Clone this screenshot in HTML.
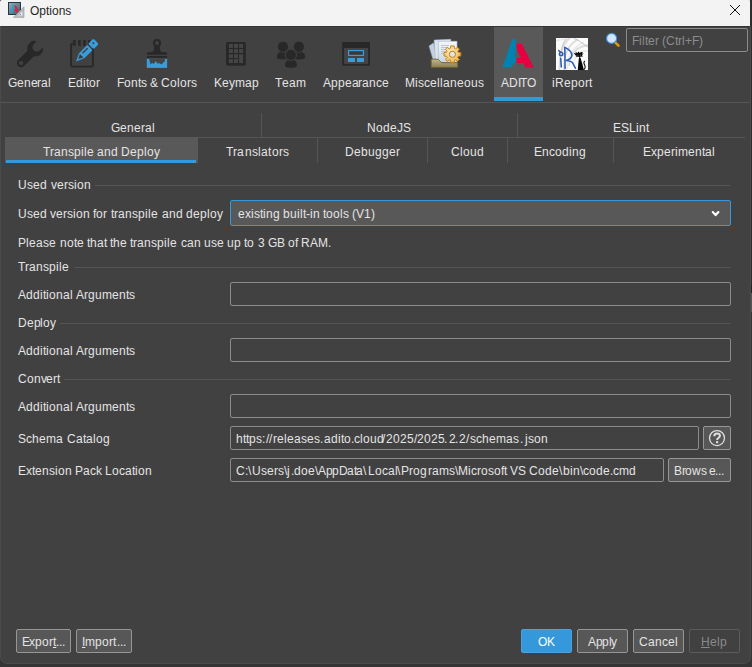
<!DOCTYPE html>
<html><head><meta charset="utf-8"><title>Options</title>
<style>
html,body{margin:0;padding:0;}
body{width:752px;height:667px;overflow:hidden;background:#353535;font-family:"Liberation Sans",sans-serif;font-size:12px;color:#e4e4e4;position:relative;font-kerning:none;}
.a{position:absolute;}
#win{position:absolute;left:0;top:0;width:751px;height:664px;background:#414141;border-radius:2px 2px 7px 7px;overflow:hidden;}
#edge{position:absolute;left:0;top:26px;width:751px;height:638px;box-sizing:border-box;border:1px solid #4b4b4b;border-top:none;border-radius:0 0 7px 7px;pointer-events:none}
#title{position:absolute;left:0;top:0;width:750px;height:26px;background:#f3f3f3;}
#title .tt{position:absolute;left:30px;top:4px;font-size:12px;line-height:14px;color:#262626;white-space:nowrap;}
.t{position:absolute;white-space:nowrap;line-height:14px;height:14px;}
.t b{display:inline-block;font-weight:normal;overflow:visible;white-space:pre}
.t b.u{text-decoration:underline;text-underline-offset:1px}
.hl{position:absolute;height:1px;background:#555}
.vl{position:absolute;width:1px;background:#555}
.tf{position:absolute;box-sizing:border-box;border:1px solid #8c8c8c;border-radius:2px;background:#414141;}
.btn{position:absolute;box-sizing:border-box;border:1px solid #969696;border-radius:2px;background:#575757;}

.w1{width:1px}.w2{width:2px}.w3{width:3px}.w4{width:4px}.w5{width:5px}.w6{width:6px}.w7{width:7px}.w8{width:8px}.w9{width:9px}.w10{width:10px}.w11{width:11px}.w12{width:12px}.w13{width:13px}
</style></head><body>
<div id="win">
<div id="title"><span class="tt">Options</span>
<svg class="a" style="left:7px;top:1px" width="19" height="18" viewBox="7 1 19 18">
<defs><linearGradient id="tg" x1="0" y1="0" x2="1" y2="1"><stop offset="0" stop-color="#9fb0b8"/><stop offset="1" stop-color="#3e5663"/></linearGradient></defs>
<rect x="8.5" y="2.5" width="12" height="12" fill="url(#tg)" stroke="#1d3a47" stroke-width="1"/>
<path d="M10.2 12.8 L12.6 4.6 L14 4.6 L13.6 9 L12.4 12.2 Z" fill="#21a6cc"/>
<path d="M14.3 5.6 L16 5.6 L19 12.6 L17 12.6 L16.3 11.2 L14.3 11.2 L14.3 9.6 L15.5 9.6 Z" fill="#e8174b"/>
<path d="M13.4 17.4 L24 6.8 L24 17.4 Z" fill="#b9bdc0" stroke="#94989b" stroke-width="0.6"/>
<path d="M18.4 15.6 L22.3 11.7 L22.3 15.6 Z" fill="#eef0f1"/>
<path d="M19.4 14 L20.6 15.2 L20.6 14 Z" fill="#3a4a54"/>
</svg>
<svg class="a" style="left:729px;top:4px" width="12" height="12" viewBox="0 0 12 12"><path d="M1 1 L11 11 M11 1 L1 11" stroke="#111" stroke-width="1" fill="none"/></svg>
</div>

<div id="tr" class="a" style="left:750px;top:0;width:1px;height:27px;background:#2e2e2e"></div>
<div id="tsh" class="a" style="left:0;top:26px;width:750px;height:1px;background:#363636"></div>
<!-- toolbar -->
<div class="a" style="left:494px;top:27px;width:49px;height:74px;background:#595959"></div>
<div class="a" style="left:494px;top:97px;width:49px;height:4px;background:#3498db"></div>
<div class="hl" style="left:0;top:102px;width:750px"></div>
<svg class="a" style="left:0;top:26px" width="750" height="76" viewBox="0 26 750 76">
<defs>
<linearGradient id="tray" x1="0" y1="0" x2="0" y2="1"><stop offset="0" stop-color="#c2b88c"/><stop offset="1" stop-color="#8a7d4c"/></linearGradient>
<linearGradient id="sheet" x1="0" y1="0" x2="0" y2="1"><stop offset="0" stop-color="#f4f7fb"/><stop offset="1" stop-color="#c9d6e6"/></linearGradient>
<radialGradient id="gear" cx="0.4" cy="0.35" r="0.7"><stop offset="0" stop-color="#fdeec8"/><stop offset="1" stop-color="#efb043"/></radialGradient>
</defs>
<!-- General: wrench -->
<mask id="wm" maskUnits="userSpaceOnUse" x="10" y="34" width="40" height="40"><rect x="10" y="34" width="40" height="40" fill="#fff"/><circle cx="36.8" cy="47.3" r="4.25" fill="#000"/><path d="M33.79 44.29 L39.81 50.31 L49.81 40.31 L43.79 34.29 Z" fill="#000"/><path d="M29 34.4 L50 55.4 L50 30 L29 30 Z" fill="#000"/><circle cx="21.1" cy="63" r="2.1" fill="#000"/></mask>
<g mask="url(#wm)"><path d="M21.1 63 L33.5 50.8" stroke="#282828" stroke-width="8.4" stroke-linecap="round" fill="none"/><circle cx="35.2" cy="48.6" r="8" fill="#282828"/></g>

<!-- Editor: notepad + pencil -->
<g fill="none" stroke="#282828" stroke-width="1.9">
<path d="M73 43.6 L72.6 43.6 Q71.1 43.6 71.1 45.1 L71.1 65.1 Q71.1 66.6 72.6 66.6 L91.4 66.6 Q92.9 66.6 92.9 65.1 L92.9 48"/>
</g>
<g fill="#282828"><rect x="73.1" y="40" width="2.6" height="5.8"/><rect x="78.1" y="40" width="2.6" height="5.8"/><rect x="83.2" y="40" width="2.6" height="5.8"/><rect x="88.2" y="40" width="2.4" height="3"/></g>
<g transform="translate(76,61.4) rotate(45)">
<path d="M0 0 L-3.7 -8 L-3.7 -19.6 L3.7 -19.6 L3.7 -8 Z" fill="#3a9ddb"/>
<rect x="-3.8" y="-28.4" width="7.6" height="7.3" rx="1.4" fill="#3a9ddb"/>
<path d="M0 -3.4 L-2.5 -8 L2.5 -8 Z" fill="#3a3a3a"/>
<path d="M-1.2 -11 L-1.2 -17.2" stroke="#414141" stroke-width="1.4" stroke-linecap="round"/>
<circle cx="-0.7" cy="-25.2" r="1" fill="#414141"/>
</g>

<!-- Fonts & Colors: brush -->
<g fill="#282828">
<circle cx="157" cy="43" r="4.1"/>
<path d="M154.2 45 L159.8 45 L159.8 49 Q159.8 52.2 164.5 52.2 L165.6 52.2 Q167 52.2 167 53.6 L167 54.8 L147 54.8 L147 53.6 Q147 52.2 148.4 52.2 L149.5 52.2 Q154.2 52.2 154.2 49 Z"/>
<rect x="147" y="56" width="20" height="1.8"/>
</g>
<circle cx="157" cy="42.9" r="2" fill="#414141"/>
<rect x="146.8" y="58.9" width="20.3" height="9" fill="#3a9ddb"/>
<path d="M149.2 58.9 L150.5 64.6 L152.2 62.7 L153.5 64 L155.9 61.2 L157.7 63.7 L159.1 63 L161.5 64.6 L163.5 62.3 L164.9 61.5 L164.9 58.9 Z" fill="#444"/>

<!-- Keymap -->
<rect x="226" y="42" width="19.8" height="23.7" rx="1.6" fill="#282828"/>
<g fill="#454545">
<rect x="228.9" y="44" width="4" height="3.9"/><rect x="234" y="44" width="4" height="3.9"/><rect x="239.1" y="44" width="4" height="3.9"/>
<rect x="228.9" y="49.1" width="4" height="3.9"/><rect x="234" y="49.1" width="4" height="3.9"/><rect x="239.1" y="49.1" width="4" height="3.9"/>
<rect x="228.9" y="54.2" width="4" height="3.8"/><rect x="234" y="54.2" width="4" height="3.8"/><rect x="239.1" y="54.2" width="4" height="8.8"/>
<rect x="228.9" y="59.1" width="4" height="3.9"/><rect x="234" y="59.1" width="4" height="3.9"/>
</g>

<!-- Team -->
<g fill="#282828">
<path d="M276.9 57.6 C276.9 53.4 279.5 51.6 283 51.6 C286.5 51.6 289.1 53.4 289.1 57.6 C289.1 58.9 286.5 59.5 283 59.5 C279.5 59.5 276.9 58.9 276.9 57.6 Z"/>
<path d="M292.9 57.6 C292.9 53.4 295.5 51.6 299 51.6 C302.5 51.6 305.1 53.4 305.1 57.6 C305.1 58.9 302.5 59.5 299 59.5 C295.5 59.5 292.9 58.9 292.9 57.6 Z"/>
</g>
<circle cx="283" cy="46.8" r="6" fill="#414141"/><circle cx="298.9" cy="46.8" r="6" fill="#414141"/>
<circle cx="283" cy="46.8" r="5.1" fill="#282828"/><circle cx="298.9" cy="46.8" r="5.1" fill="#282828"/>
<path d="M285 65.4 C285 61 287.5 59.4 291 59.4 C294.5 59.4 297 61 297 65.4 C297 66.9 294.5 67.7 291 67.7 C287.5 67.7 285 66.9 285 65.4 Z" fill="#282828"/>
<circle cx="290.9" cy="54.9" r="6.1" fill="#414141"/>
<circle cx="290.9" cy="54.9" r="5.1" fill="#282828"/>

<!-- Appearance -->
<rect x="342.2" y="42" width="27.8" height="23.7" rx="1.2" fill="#282828"/>
<rect x="344.1" y="48" width="24" height="15.9" fill="#444"/>
<rect x="348.6" y="50.6" width="14.8" height="4.8" fill="#3b3836" stroke="#3a9ddb" stroke-width="1.2"/>
<rect x="348" y="58.1" width="7" height="3.9" rx="0.6" fill="#3a9ddb"/><rect x="357" y="58.1" width="7" height="3.9" rx="0.6" fill="#3a9ddb"/>

<!-- Miscellaneous -->
<g>
<path d="M429 45.9 L433.6 42.8 L436.5 58.5 L433 59.5 Z" fill="#c3d0df" stroke="#9aa9ba" stroke-width="0.5"/>
<path d="M434.1 40 L450.8 39.3 L451 59 L435.5 59.5 Z" fill="#dbe5f0" stroke="#a8b6c6" stroke-width="0.5"/>
<rect x="438.2" y="41.2" width="18.8" height="21" fill="url(#sheet)" stroke="#a8b6c6" stroke-width="0.6"/>
<g stroke="#a9b4c0" stroke-width="0.7"><path d="M441 45.5 H449 M441 47.5 H448 M441 49.5 H447 M441 51.5 H446 M441 53.5 H445.5"/></g>
<path d="M431.2 59.2 L438.2 59.2 L441.6 62.7 L457.7 62.7 L457.7 67.5 L431.2 67.5 Z" fill="url(#tray)" stroke="#6b5f2e" stroke-width="0.8"/>
<g transform="translate(452.4,54.3)">
<g fill="url(#gear)" stroke="#c27d0a" stroke-width="0.9">
<path d="M-1.7 -8.4 L1.7 -8.4 L2 -5.9 L3.2 -5.4 L5.1 -7 L7 -5.1 L5.4 -3.2 L5.9 -2 L8.4 -1.7 L8.4 1.7 L5.9 2 L5.4 3.2 L7 5.1 L5.1 7 L3.2 5.4 L2 5.9 L1.7 8.4 L-1.7 8.4 L-2 5.9 L-3.2 5.4 L-5.1 7 L-7 5.1 L-5.4 3.2 L-5.9 2 L-8.4 1.7 L-8.4 -1.7 L-5.9 -2 L-5.4 -3.2 L-7 -5.1 L-5.1 -7 L-3.2 -5.4 L-2 -5.9 Z"/>
</g>
<circle r="3.1" fill="#dbe6f2" stroke="#c27d0a" stroke-width="1"/>
</g>
</g>

<!-- ADITO -->
<path d="M512.2 39.2 L515.8 39.2 L515.8 52.8 L514.3 56 L515.8 56 L515.8 62.3 L510.3 67.5 L502.4 67.5 Z" fill="#0083b3"/>
<path d="M516.8 44.1 L521.8 44.1 L533.8 67.5 L525.4 67.5 L523.5 62.9 L516.8 62.9 L516.8 58.1 L521.1 58.1 L516.8 49.5 Z" fill="#e6003f"/>

<!-- iReport -->
<clipPath id="clipir"><rect x="0" y="0" width="32" height="32"/></clipPath>
<g transform="translate(556,38)" clip-path="url(#clipir)">
<rect x="0" y="0" width="32" height="32" fill="#fbfbfb"/>
<g fill="none" stroke="#dcdcdc" stroke-width="1.8">
<path d="M3.5 32 C3 16 6 6 14 0"/><path d="M8 32 C7.5 18 11 7 22 1.5"/><path d="M13 28 C14 17 19 9 32 7"/>
</g>
<g fill="none" stroke="#e9e9e9" stroke-width="1.4"><path d="M11 32 C11 20 15 10 28 4"/><path d="M18 23 C20 16 25 12 32 13"/><path d="M0 3 C4 1.5 8 1 12 1.5"/></g>
<g fill="none" stroke="#c4c4c4" stroke-width="1"><path d="M18 0.5 C23 1.5 25.5 5.5 32 9"/><path d="M5.5 14 C5.5 8 7.5 3.5 11 0.5"/></g>
<g fill="none" stroke="#2f5fb3" stroke-width="1.6" stroke-linecap="round" stroke-linejoin="round">
<circle cx="5.1" cy="15.9" r="1.7"/>
<path d="M4.7 20.4 L5.3 29"/>
<path d="M8.8 9.6 L9.1 30.4"/>
<path d="M8.9 9.4 C12.5 10.6 16.3 14.4 15.9 17.3 C15.5 20.2 12.6 21.8 10 22.5 C13 22.8 15.8 23.6 16.6 24.8 L19.4 30.2"/>
<path d="M2.8 12.6 L4.2 13.8"/>
</g>
<g fill="#050505">
<path d="M19.4 17.2 L17.8 15 L20.4 15.6 L19.2 13.8 L21.6 14.9 L22.5 13.6 L23.6 14.9 L25.4 13.9 L26.8 14 L25.9 15.4 L27.6 15.6 L26 17 L26.9 18.8 L24.8 18.5 L23.5 19.6 L22.1 18.6 L20.2 19.2 L20.5 17.7 Z"/>
<path d="M23 19.3 L24.4 19.5 L26.2 25.4 L27.4 30 L27.7 32 L21.8 32 L22.2 27 Z"/>
<path d="M27 31.4 C29.2 30.4 28.8 28 27.8 26.4 C27 25 27.4 23.2 28.4 22.4 L29.1 23.2 C28.3 24 28.3 25.2 28.9 26.2 C30.1 28.4 30 31.2 27.6 32.2 Z"/>
</g>
<path d="M21.5 16.6 L22.7 17.1 L21.7 17.7 Z M23.7 17.1 L24.9 16.6 L24.6 17.7 Z" fill="#d8b61c"/>
</g>

<!-- magnifier -->
<path d="M615.2 42.4 L618.5 45.6" stroke="#e39a06" stroke-width="2.6" stroke-linecap="round"/>
<circle cx="611.6" cy="38.4" r="5" fill="#d2e7ff" stroke="#3b8fe8" stroke-width="1.1"/>
</svg>


<!-- filter -->
<div class="tf" style="left:626px;top:28px;width:122px;height:24px;"></div>

<!-- sub tabs -->
<div class="vl" style="left:261px;top:113px;height:25px"></div>
<div class="vl" style="left:517px;top:113px;height:25px"></div>
<div class="hl" style="left:198px;top:137px;width:547px"></div>
<div class="a" style="left:5px;top:137px;width:193px;height:26px;background:#595959"></div>
<div class="a" style="left:6px;top:160px;width:190px;height:3px;background:#3498db"></div>
<div class="vl" style="left:317px;top:137px;height:26px"></div>
<div class="vl" style="left:427px;top:137px;height:26px"></div>
<div class="vl" style="left:507px;top:137px;height:26px"></div>
<div class="vl" style="left:613px;top:137px;height:26px"></div>

<!-- content -->
<div class="hl" style="left:95px;top:185px;width:635px"></div>
<div class="tf" style="left:230px;top:200px;width:501px;height:26px;border-color:#3498db;background:#585858;border-radius:2px"></div>
<svg class="a" style="left:710px;top:208px" width="12" height="10" viewBox="710 208 12 10"><path d="M712.8 212.1 L715.6 215.1 L718.4 212.1" stroke="#fff" stroke-width="2.2" fill="none" stroke-linecap="round" stroke-linejoin="round"/></svg>

<div class="hl" style="left:74px;top:267px;width:656px"></div>
<div class="tf" style="left:230px;top:282px;width:501px;height:24px"></div>
<div class="hl" style="left:60px;top:323px;width:670px"></div>
<div class="tf" style="left:230px;top:338px;width:501px;height:24px"></div>
<div class="hl" style="left:64px;top:379px;width:666px"></div>
<div class="tf" style="left:230px;top:394px;width:501px;height:24px"></div>

<div class="tf" style="left:230px;top:426px;width:469px;height:24px"></div>
<div class="btn" style="left:703px;top:426px;width:28px;height:24px"></div>
<svg class="a" style="left:707px;top:428px" width="20" height="20" viewBox="707 428 20 20"><circle cx="717" cy="438.1" r="7.5" fill="none" stroke="#dedede" stroke-width="1.3"/><path d="M714.3 436.3 C714.3 434.4 715.7 433.6 717.1 433.6 C718.7 433.6 719.9 434.5 719.9 435.9 C719.9 437.7 717.1 437.9 717.1 440" fill="none" stroke="#dedede" stroke-width="2"/><rect x="716" y="441.1" width="2.2" height="2.1" fill="#dedede"/></svg>

<div class="tf" style="left:230px;top:458px;width:434px;height:24px"></div>
<div class="btn" style="left:668px;top:458px;width:63px;height:24px"></div>

<!-- bottom buttons -->
<div class="btn" style="left:16px;top:629px;width:55px;height:24px"></div>
<div class="btn" style="left:76px;top:629px;width:56px;height:24px"></div>
<div class="btn" style="left:521px;top:629px;width:51px;height:24px;background:#3498db;border-color:#4aa3df"></div>
<div class="btn" style="left:577px;top:629px;width:51px;height:24px"></div>
<div class="btn" style="left:633px;top:629px;width:51px;height:24px"></div>
<div class="btn" style="left:689px;top:629px;width:51px;height:24px;background:#414141;border-color:#5c5c5c"></div>

<div class="t" style="left:8px;top:76px;"><b class="w9">G</b><b class="w7">e</b><b class="w7">n</b><b class="w6">e</b><b class="w4">r</b><b class="w7">a</b><b class="w3">l</b></div>
<div class="t" style="left:68px;top:76px;"><b class="w8">E</b><b class="w7">d</b><b class="w3">i</b><b class="w3">t</b><b class="w7">o</b><b class="w4">r</b></div>
<div class="t" style="left:117px;top:76px;"><b class="w7">F</b><b class="w7">o</b><b class="w7">n</b><b class="w3">t</b><b class="w6">s</b></div>
<div class="t" style="left:150px;top:76px;"><b class="w8">&amp;</b></div>
<div class="t" style="left:161px;top:76px;"><b class="w9">C</b><b class="w7">o</b><b class="w3">l</b><b class="w7">o</b><b class="w4">r</b><b class="w6">s</b></div>
<div class="t" style="left:214px;top:76px;"><b class="w8">K</b><b class="w7">e</b><b class="w6">y</b><b class="w10">m</b><b class="w7">a</b><b class="w7">p</b></div>
<div class="t" style="left:275px;top:76px;"><b class="w7">T</b><b class="w7">e</b><b class="w7">a</b><b class="w10">m</b></div>
<div class="t" style="left:323px;top:76px;"><b class="w8">A</b><b class="w7">p</b><b class="w7">p</b><b class="w7">e</b><b class="w6">a</b><b class="w4">r</b><b class="w7">a</b><b class="w7">n</b><b class="w6">c</b><b class="w7">e</b></div>
<div class="t" style="left:405px;top:76px;"><b class="w10">M</b><b class="w3">i</b><b class="w6">s</b><b class="w6">c</b><b class="w7">e</b><b class="w3">l</b><b class="w3">l</b><b class="w7">a</b><b class="w7">n</b><b class="w7">e</b><b class="w7">o</b><b class="w7">u</b><b class="w6">s</b></div>
<div class="t" style="left:501px;top:76px;"><b class="w8">A</b><b class="w9">D</b><b class="w2">I</b><b class="w7">T</b><b class="w9">O</b></div>
<div class="t" style="left:552px;top:76px;"><b class="w3">i</b><b class="w9">R</b><b class="w7">e</b><b class="w7">p</b><b class="w7">o</b><b class="w4">r</b><b class="w3">t</b></div>
<div class="t" style="left:632px;top:34px;color:#8c8c8c;"><b class="w7">F</b><b class="w3">i</b><b class="w3">l</b><b class="w3">t</b><b class="w7">e</b><b class="w4">r</b><b class="w3">&nbsp;</b><b class="w4">(</b><b class="w9">C</b><b class="w3">t</b><b class="w4">r</b><b class="w3">l</b><b class="w7">+</b><b class="w7">F</b><b class="w4">)</b></div>
<div class="t" style="left:111px;top:121px;"><b class="w9">G</b><b class="w7">e</b><b class="w7">n</b><b class="w7">e</b><b class="w4">r</b><b class="w7">a</b><b class="w3">l</b></div>
<div class="t" style="left:367px;top:121px;"><b class="w9">N</b><b class="w7">o</b><b class="w7">d</b><b class="w7">e</b><b class="w6">J</b><b class="w8">S</b></div>
<div class="t" style="left:613px;top:121px;"><b class="w8">E</b><b class="w8">S</b><b class="w7">L</b><b class="w3">i</b><b class="w7">n</b><b class="w3">t</b></div>
<div class="t" style="left:43px;top:145px;"><b class="w7">T</b><b class="w4">r</b><b class="w7">a</b><b class="w7">n</b><b class="w6">s</b><b class="w7">p</b><b class="w3">i</b><b class="w3">l</b><b class="w7">e</b><b class="w3">&nbsp;</b><b class="w7">a</b><b class="w7">n</b><b class="w7">d</b><b class="w3">&nbsp;</b><b class="w9">D</b><b class="w7">e</b><b class="w7">p</b><b class="w3">l</b><b class="w7">o</b><b class="w6">y</b></div>
<div class="t" style="left:226px;top:145px;"><b class="w7">T</b><b class="w4">r</b><b class="w8">a</b><b class="w7">n</b><b class="w6">s</b><b class="w3">l</b><b class="w7">a</b><b class="w4">t</b><b class="w7">o</b><b class="w4">r</b><b class="w6">s</b></div>
<div class="t" style="left:345px;top:145px;"><b class="w9">D</b><b class="w7">e</b><b class="w7">b</b><b class="w7">u</b><b class="w7">g</b><b class="w7">g</b><b class="w7">e</b><b class="w4">r</b></div>
<div class="t" style="left:451px;top:145px;"><b class="w9">C</b><b class="w3">l</b><b class="w7">o</b><b class="w7">u</b><b class="w7">d</b></div>
<div class="t" style="left:534px;top:145px;"><b class="w8">E</b><b class="w7">n</b><b class="w6">c</b><b class="w7">o</b><b class="w7">d</b><b class="w3">i</b><b class="w7">n</b><b class="w7">g</b></div>
<div class="t" style="left:643px;top:145px;"><b class="w8">E</b><b class="w6">x</b><b class="w7">p</b><b class="w7">e</b><b class="w4">r</b><b class="w3">i</b><b class="w10">m</b><b class="w7">e</b><b class="w7">n</b><b class="w3">t</b><b class="w7">a</b><b class="w3">l</b></div>
<div class="t" style="left:18px;top:178px;"><b class="w9">U</b><b class="w6">s</b><b class="w7">e</b><b class="w7">d</b><b class="w4">&nbsp;</b><b class="w6">v</b><b class="w7">e</b><b class="w4">r</b><b class="w6">s</b><b class="w3">i</b><b class="w7">o</b><b class="w7">n</b></div>
<div class="t" style="left:18px;top:207px;"><b class="w9">U</b><b class="w6">s</b><b class="w7">e</b><b class="w7">d</b></div>
<div class="t" style="left:50px;top:207px;"><b class="w6">v</b><b class="w7">e</b><b class="w4">r</b><b class="w6">s</b><b class="w3">i</b><b class="w7">o</b><b class="w7">n</b></div>
<div class="t" style="left:93px;top:207px;"><b class="w3">f</b><b class="w7">o</b><b class="w4">r</b></div>
<div class="t" style="left:111px;top:207px;"><b class="w3">t</b><b class="w4">r</b><b class="w7">a</b><b class="w7">n</b><b class="w6">s</b><b class="w7">p</b><b class="w3">i</b><b class="w3">l</b><b class="w7">e</b></div>
<div class="t" style="left:162px;top:207px;"><b class="w7">a</b><b class="w7">n</b><b class="w7">d</b></div>
<div class="t" style="left:186px;top:207px;"><b class="w7">d</b><b class="w7">e</b><b class="w7">p</b><b class="w3">l</b><b class="w7">o</b><b class="w6">y</b></div>
<div class="t" style="left:238px;top:207px;"><b class="w7">e</b><b class="w6">x</b><b class="w3">i</b><b class="w6">s</b><b class="w3">t</b><b class="w3">i</b><b class="w7">n</b><b class="w7">g</b><b class="w3">&nbsp;</b><b class="w7">b</b><b class="w7">u</b><b class="w3">i</b><b class="w3">l</b><b class="w3">t</b><b class="w4">-</b><b class="w3">i</b><b class="w7">n</b><b class="w3">&nbsp;</b><b class="w3">t</b><b class="w7">o</b><b class="w7">o</b><b class="w3">l</b><b class="w6">s</b><b class="w3">&nbsp;</b><b class="w4">(</b><b class="w8">V</b><b class="w7">1</b><b class="w4">)</b></div>
<div class="t" style="left:18px;top:236px;"><b class="w8">P</b><b class="w3">l</b><b class="w7">e</b><b class="w7">a</b><b class="w6">s</b><b class="w7">e</b></div>
<div class="t" style="left:60px;top:236px;"><b class="w7">n</b><b class="w7">o</b><b class="w3">t</b><b class="w7">e</b></div>
<div class="t" style="left:87px;top:236px;"><b class="w3">t</b><b class="w7">h</b><b class="w7">a</b><b class="w3">t</b></div>
<div class="t" style="left:110px;top:236px;"><b class="w3">t</b><b class="w7">h</b><b class="w7">e</b></div>
<div class="t" style="left:130px;top:236px;"><b class="w3">t</b><b class="w4">r</b><b class="w7">a</b><b class="w7">n</b><b class="w6">s</b><b class="w7">p</b><b class="w3">i</b><b class="w3">l</b><b class="w7">e</b></div>
<div class="t" style="left:181px;top:236px;"><b class="w6">c</b><b class="w7">a</b><b class="w7">n</b></div>
<div class="t" style="left:204px;top:236px;"><b class="w7">u</b><b class="w6">s</b><b class="w7">e</b></div>
<div class="t" style="left:227px;top:236px;"><b class="w7">u</b><b class="w7">p</b></div>
<div class="t" style="left:244px;top:236px;"><b class="w3">t</b><b class="w7">o</b></div>
<div class="t" style="left:258px;top:236px;"><b class="w7">3</b></div>
<div class="t" style="left:268px;top:236px;"><b class="w9">G</b><b class="w8">B</b></div>
<div class="t" style="left:288px;top:236px;"><b class="w7">o</b><b class="w3">f</b></div>
<div class="t" style="left:301px;top:236px;"><b class="w9">R</b><b class="w8">A</b><b class="w10">M</b><b class="w3">.</b></div>
<div class="t" style="left:18px;top:260px;"><b class="w7">T</b><b class="w4">r</b><b class="w7">a</b><b class="w7">n</b><b class="w6">s</b><b class="w7">p</b><b class="w3">i</b><b class="w3">l</b><b class="w7">e</b></div>
<div class="t" style="left:18px;top:288px;"><b class="w8">A</b><b class="w7">d</b><b class="w7">d</b><b class="w3">i</b><b class="w3">t</b><b class="w3">i</b><b class="w7">o</b><b class="w7">n</b><b class="w7">a</b><b class="w3">l</b></div>
<div class="t" style="left:76px;top:288px;"><b class="w8">A</b><b class="w4">r</b><b class="w7">g</b><b class="w7">u</b><b class="w10">m</b><b class="w7">e</b><b class="w7">n</b><b class="w3">t</b><b class="w6">s</b></div>
<div class="t" style="left:18px;top:316px;"><b class="w9">D</b><b class="w7">e</b><b class="w6">p</b><b class="w3">l</b><b class="w7">o</b><b class="w6">y</b></div>
<div class="t" style="left:18px;top:344px;"><b class="w8">A</b><b class="w7">d</b><b class="w7">d</b><b class="w3">i</b><b class="w3">t</b><b class="w3">i</b><b class="w7">o</b><b class="w7">n</b><b class="w7">a</b><b class="w3">l</b></div>
<div class="t" style="left:76px;top:344px;"><b class="w8">A</b><b class="w4">r</b><b class="w7">g</b><b class="w7">u</b><b class="w10">m</b><b class="w7">e</b><b class="w7">n</b><b class="w3">t</b><b class="w6">s</b></div>
<div class="t" style="left:18px;top:372px;"><b class="w9">C</b><b class="w7">o</b><b class="w7">n</b><b class="w5">v</b><b class="w7">e</b><b class="w4">r</b><b class="w3">t</b></div>
<div class="t" style="left:18px;top:400px;"><b class="w8">A</b><b class="w7">d</b><b class="w7">d</b><b class="w3">i</b><b class="w3">t</b><b class="w3">i</b><b class="w7">o</b><b class="w7">n</b><b class="w7">a</b><b class="w3">l</b></div>
<div class="t" style="left:76px;top:400px;"><b class="w8">A</b><b class="w4">r</b><b class="w7">g</b><b class="w7">u</b><b class="w10">m</b><b class="w7">e</b><b class="w7">n</b><b class="w3">t</b><b class="w6">s</b></div>
<div class="t" style="left:18px;top:432px;"><b class="w8">S</b><b class="w6">c</b><b class="w7">h</b><b class="w7">e</b><b class="w10">m</b><b class="w7">a</b></div>
<div class="t" style="left:67px;top:432px;"><b class="w9">C</b><b class="w7">a</b><b class="w3">t</b><b class="w7">a</b><b class="w3">l</b><b class="w7">o</b><b class="w7">g</b></div>
<div class="t" style="left:236px;top:432px;"><b class="w7">h</b><b class="w3">t</b><b class="w3">t</b><b class="w7">p</b><b class="w6">s</b></div>
<div class="t" style="left:262px;top:432px;"><b class="w3">:</b></div>
<div class="t" style="left:266px;top:432px;"><b class="w3">/</b></div>
<div class="t" style="left:269px;top:432px;"><b class="w3">/</b></div>
<div class="t" style="left:273px;top:432px;"><b class="w4">r</b><b class="w7">e</b><b class="w3">l</b><b class="w7">e</b><b class="w7">a</b><b class="w6">s</b><b class="w7">e</b><b class="w6">s</b></div>
<div class="t" style="left:320px;top:432px;"><b class="w3">.</b></div>
<div class="t" style="left:324px;top:432px;"><b class="w7">a</b><b class="w7">d</b><b class="w3">i</b><b class="w3">t</b><b class="w7">o</b></div>
<div class="t" style="left:351px;top:432px;"><b class="w3">.</b></div>
<div class="t" style="left:354px;top:432px;"><b class="w6">c</b><b class="w3">l</b><b class="w7">o</b><b class="w7">u</b><b class="w7">d</b></div>
<div class="t" style="left:382px;top:432px;"><b class="w3">/</b></div>
<div class="t" style="left:386px;top:432px;"><b class="w7">2</b><b class="w7">0</b><b class="w7">2</b><b class="w7">5</b></div>
<div class="t" style="left:414px;top:432px;"><b class="w3">/</b></div>
<div class="t" style="left:417px;top:432px;"><b class="w7">2</b><b class="w7">0</b><b class="w7">2</b><b class="w7">5</b></div>
<div class="t" style="left:444px;top:432px;"><b class="w3">.</b></div>
<div class="t" style="left:449px;top:432px;"><b class="w7">2</b></div>
<div class="t" style="left:455px;top:432px;"><b class="w3">.</b></div>
<div class="t" style="left:459px;top:432px;"><b class="w7">2</b></div>
<div class="t" style="left:466px;top:432px;"><b class="w3">/</b></div>
<div class="t" style="left:470px;top:432px;"><b class="w6">s</b><b class="w6">c</b><b class="w7">h</b><b class="w7">e</b><b class="w10">m</b><b class="w7">a</b><b class="w6">s</b></div>
<div class="t" style="left:520px;top:432px;"><b class="w3">.</b></div>
<div class="t" style="left:525px;top:432px;"><b class="w3">j</b><b class="w6">s</b><b class="w7">o</b><b class="w7">n</b></div>
<div class="t" style="left:18px;top:464px;"><b class="w8">E</b><b class="w6">x</b><b class="w3">t</b><b class="w7">e</b><b class="w7">n</b><b class="w6">s</b><b class="w3">i</b><b class="w7">o</b><b class="w7">n</b><b class="w3">&nbsp;</b><b class="w8">P</b><b class="w7">a</b><b class="w6">c</b><b class="w6">k</b><b class="w3">&nbsp;</b><b class="w7">L</b><b class="w7">o</b><b class="w6">c</b><b class="w7">a</b><b class="w3">t</b><b class="w3">i</b><b class="w7">o</b><b class="w7">n</b></div>
<div class="t" style="left:236px;top:464px;"><b class="w9">C</b></div>
<div class="t" style="left:245px;top:464px;"><b class="w3">:</b></div>
<div class="t" style="left:248px;top:464px;"><b class="w3">\</b></div>
<div class="t" style="left:252px;top:464px;"><b class="w9">U</b><b class="w6">s</b><b class="w7">e</b><b class="w4">r</b><b class="w6">s</b></div>
<div class="t" style="left:284px;top:464px;"><b class="w3">\</b></div>
<div class="t" style="left:287px;top:464px;"><b class="w3">j</b></div>
<div class="t" style="left:291px;top:464px;"><b class="w3">.</b></div>
<div class="t" style="left:294px;top:464px;"><b class="w7">d</b><b class="w7">o</b><b class="w7">e</b></div>
<div class="t" style="left:315px;top:464px;"><b class="w3">\</b></div>
<div class="t" style="left:318px;top:464px;"><b class="w8">A</b><b class="w6">p</b><b class="w7">p</b><b class="w8">D</b><b class="w7">a</b><b class="w2">t</b><b class="w7">a</b></div>
<div class="t" style="left:363px;top:464px;"><b class="w3">\</b></div>
<div class="t" style="left:368px;top:464px;"><b class="w7">L</b><b class="w7">o</b><b class="w6">c</b><b class="w7">a</b><b class="w3">l</b></div>
<div class="t" style="left:397px;top:464px;"><b class="w3">\</b></div>
<div class="t" style="left:401px;top:464px;"><b class="w8">P</b><b class="w4">r</b><b class="w7">o</b><b class="w8">g</b><b class="w4">r</b><b class="w7">a</b><b class="w10">m</b><b class="w6">s</b></div>
<div class="t" style="left:455px;top:464px;"><b class="w3">\</b></div>
<div class="t" style="left:458px;top:464px;"><b class="w10">M</b><b class="w3">i</b><b class="w6">c</b><b class="w4">r</b><b class="w7">o</b><b class="w6">s</b><b class="w7">o</b><b class="w3">f</b><b class="w3">t</b></div>
<div class="t" style="left:510px;top:464px;"><b class="w8">V</b><b class="w8">S</b></div>
<div class="t" style="left:529px;top:464px;"><b class="w9">C</b><b class="w7">o</b><b class="w7">d</b><b class="w7">e</b></div>
<div class="t" style="left:559px;top:464px;"><b class="w3">\</b></div>
<div class="t" style="left:563px;top:464px;"><b class="w7">b</b><b class="w3">i</b><b class="w7">n</b></div>
<div class="t" style="left:580px;top:464px;"><b class="w3">\</b></div>
<div class="t" style="left:583px;top:464px;"><b class="w6">c</b><b class="w7">o</b><b class="w7">d</b><b class="w7">e</b></div>
<div class="t" style="left:610px;top:464px;"><b class="w3">.</b></div>
<div class="t" style="left:613px;top:464px;"><b class="w6">c</b><b class="w10">m</b><b class="w7">d</b></div>
<div class="t" style="left:674px;top:464px;"><b class="w8">B</b></div>
<div class="t" style="left:682px;top:464px;"><b class="w4">r</b></div>
<div class="t" style="left:685px;top:464px;"><b class="w7">o</b></div>
<div class="t" style="left:692px;top:464px;"><b class="w9">w</b></div>
<div class="t" style="left:701px;top:464px;"><b class="w6">s</b></div>
<div class="t" style="left:709px;top:464px;"><b class="w7">e</b></div>
<div class="t" style="left:715px;top:464px;"><b class="w3">.</b><b class="w3">.</b><b class="w3">.</b></div>
<div class="t" style="left:22px;top:635px;"><b class="w8">E</b></div>
<div class="t" style="left:29px;top:635px;"><b class="w6">x</b><b class="w7">p</b><b class="w7">o</b><b class="w4">r</b><b class="w3 u">t</b><b class="w3">.</b><b class="w3">.</b><b class="w3">.</b></div>
<div class="t" style="left:82px;top:635px;"><b class="w3 u">I</b><b class="w10">m</b><b class="w7">p</b><b class="w7">o</b><b class="w4">r</b><b class="w3">t</b></div>
<div class="t" style="left:117px;top:635px;"><b class="w3">.</b><b class="w3">.</b><b class="w3">.</b></div>
<div class="t" style="left:538px;top:635px;color:#fff;"><b class="w9">O</b><b class="w8">K</b></div>
<div class="t" style="left:588px;top:635px;"><b class="w8">A</b><b class="w6">p</b><b class="w7">p</b><b class="w2">l</b><b class="w6">y</b></div>
<div class="t" style="left:639px;top:635px;"><b class="w9">C</b><b class="w7">a</b><b class="w7">n</b><b class="w6">c</b><b class="w7">e</b><b class="w3">l</b></div>
<div class="t" style="left:701px;top:635px;color:#8a8a8a;"><b class="w9 u">H</b><b class="w7">e</b><b class="w3">l</b><b class="w7">p</b></div>

<div id="edge"></div>
</div>

<div id="rs1" class="a" style="left:751px;top:0;width:1px;height:300px;background:#2d2d2d"></div>
<div class="a" style="left:751px;top:285px;width:1px;height:8px;background:#222"></div>
<div class="a" style="left:751px;top:293px;width:1px;height:19px;background:#555"></div>

</body></html>
